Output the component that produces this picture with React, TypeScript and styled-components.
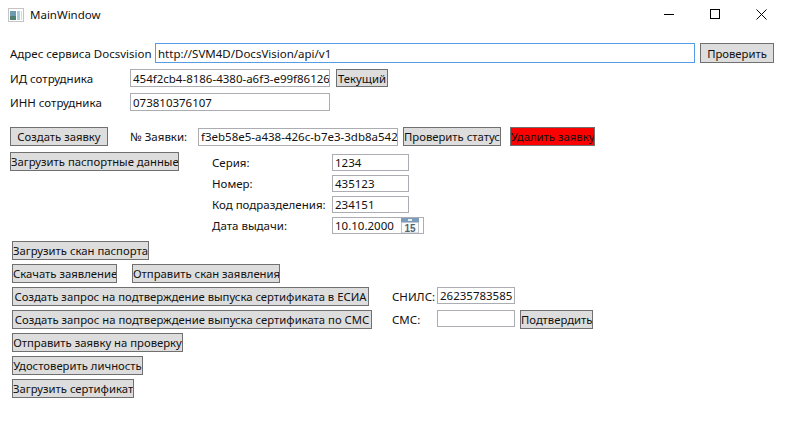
import React from 'react';
import styled, { createGlobalStyle } from 'styled-components';

const GlobalStyle = createGlobalStyle`
  html, body {
    margin: 0;
    padding: 0;
    background: #ffffff;
  }
`;

const Window = styled.div`
  width: 786px;
  height: 437px;
  overflow: hidden;
  background: #ffffff;
  color: #111111;
  font-family: "Noto Sans", "Open Sans", sans-serif;
  font-size: 11.5px;
  box-sizing: border-box;
`;

const TitleBar = styled.div`
  height: 30px;
  display: flex;
  align-items: center;
  padding: 0 2px 0 8px;
`;

const TitleText = styled.span`
  flex: 1;
  margin: -2px 0 0 6px;
  color: #111;
`;

const WindowControls = styled.div`
  display: flex;
  margin-top: -2px;
`;

const WindowButton = styled.div`
  width: 46px;
  height: 28px;
  display: flex;
  align-items: center;
  justify-content: center;
`;

const Content = styled.div`
  display: flex;
  flex-direction: column;
  padding: 9px 0 0 10px;
`;

const Row = styled.div<{ $top?: number; $left?: number; $h?: number }>`
  display: flex;
  align-items: center;
  height: ${(p) => p.$h ?? 19}px;
  margin-top: ${(p) => p.$top ?? 4}px;
  margin-left: ${(p) => p.$left ?? 0}px;
`;

const Label = styled.span<{ $w: number; $left?: number }>`
  width: ${(p) => p.$w}px;
  margin-left: ${(p) => p.$left ?? 0}px;
  flex: none;
  white-space: nowrap;
`;

const Field = styled.div<{ $w: number; $h?: number; $focus?: boolean; $top?: boolean }>`
  width: ${(p) => p.$w}px;
  height: ${(p) => p.$h ?? 18}px;
  flex: none;
  align-self: ${(p) => (p.$top ? 'flex-start' : 'auto')};
  box-sizing: border-box;
  border: 1px solid ${(p) => (p.$focus ? '#569de5' : '#abadb3')};
  padding: 0 2px;
  display: flex;
  align-items: center;
  overflow: hidden;
  white-space: nowrap;
  background: #fff;
`;

const DateField = styled(Field)`
  padding-right: 4px;
  align-items: flex-start;
  line-height: 15px;
`;

const Button = styled.div<{ $w: number; $h?: number; $left?: number; $danger?: boolean }>`
  width: ${(p) => p.$w}px;
  height: ${(p) => p.$h ?? 19}px;
  margin-left: ${(p) => p.$left ?? 0}px;
  flex: none;
  box-sizing: border-box;
  border: 1px solid #707070;
  background: ${(p) => (p.$danger ? '#ff0000' : '#dddddd')};
  font-size: 11.3px;
  display: flex;
  align-items: center;
  justify-content: safe center;
  overflow: hidden;
  white-space: nowrap;
`;

const PassportSection = styled.div`
  display: flex;
  margin-top: 6px;
  height: 85px;
`;

const PassportGrid = styled.div`
  display: grid;
  grid-template-columns: 120px 92px;
  grid-auto-rows: 17px;
  row-gap: 4px;
  margin: 2px 0 0 33px;
  align-items: center;
`;

const ActionList = styled.div`
  display: flex;
  flex-direction: column;
`;

const DateValue = styled.span`
  flex: 1;
`;

const CalendarIcon = () => (
  <svg width="18" height="15" viewBox="0 0 18 15">
    <rect x="0" y="0" width="18" height="15" fill="#eef2f6" />
    <rect x="0" y="0" width="18" height="4" fill="#7c9cbb" />
    <rect x="7" y="1" width="4" height="2" fill="#e6eef6" />
    <rect x="0.5" y="4.5" width="17" height="10.5" fill="#fbfcfd" stroke="#b9c4ce" />
    <text x="9" y="13.5" textAnchor="middle" fontSize="10" fontWeight="700" fill="#56626d" fontFamily="Liberation Sans, sans-serif">
      15
    </text>
  </svg>
);

const AppIcon = () => (
  <svg width="16" height="14" viewBox="0 0 16 14">
    <rect x="0.5" y="0.5" width="15" height="13" fill="#fff" stroke="#c4c4c4" />
    <rect x="2" y="3" width="6" height="9" fill="#6d9ab0" />
    <rect x="2" y="8" width="6" height="4" fill="#4f7f6c" />
    <rect x="9" y="3" width="3" height="9" fill="#a6cfd8" />
    <rect x="13" y="3" width="1" height="9" fill="#d9d9d9" />
  </svg>
);

const MinimizeIcon = () => (
  <svg width="10" height="10" viewBox="0 0 10 10">
    <path d="M0 5.5H10" stroke="#000" strokeWidth="1" />
  </svg>
);

const MaximizeIcon = () => (
  <svg width="10" height="10" viewBox="0 0 10 10">
    <rect x="0.5" y="0.5" width="9" height="9" fill="none" stroke="#000" />
  </svg>
);

const CloseIcon = () => (
  <svg width="11" height="11" viewBox="0 0 11 11">
    <path d="M0.5 0.5L10.5 10.5M10.5 0.5L0.5 10.5" stroke="#000" strokeWidth="1" />
  </svg>
);

const App: React.FC = () => {
  return (
    <Window>
      <GlobalStyle />
      <TitleBar>
        <AppIcon />
        <TitleText>MainWindow</TitleText>
        <WindowControls>
          <WindowButton><MinimizeIcon /></WindowButton>
          <WindowButton><MaximizeIcon /></WindowButton>
          <WindowButton><CloseIcon /></WindowButton>
        </WindowControls>
      </TitleBar>
      <Content>
        <Row $h={20}>
          <Label $w={145}>Адрес сервиса Docsvision</Label>
          <Field $w={540} $h={20} $focus>http://SVM4D/DocsVision/api/v1</Field>
          <Button $w={74} $h={20} $left={5}>Проверить</Button>
        </Row>
        <Row $top={6} $h={18}>
          <Label $w={120}>ИД сотрудника</Label>
          <Field $w={200}>454f2cb4-8186-4380-a6f3-e99f86126</Field>
          <Button $w={52} $h={18} $left={6}>Текущий</Button>
        </Row>
        <Row $top={6} $h={18}>
          <Label $w={120}>ИНН сотрудника</Label>
          <Field $w={200}>073810376107</Field>
        </Row>
        <Row $top={16}>
          <Button $w={98}>Создать заявку</Button>
          <Label $w={68} $left={22}>№ Заявки:</Label>
          <Field $w={200}>f3eb58e5-a438-426c-b7e3-3db8a542</Field>
          <Button $w={98} $left={5}>Проверить статус</Button>
          <Button $w={85} $left={9} $danger>Удалить заявку</Button>
        </Row>
        <PassportSection>
          <Button $w={169}>Загрузить паспортные данные</Button>
          <PassportGrid>
            <Label $w={120}>Серия:</Label>
            <Field $w={77} $h={17}>1234</Field>
            <Label $w={120}>Номер:</Label>
            <Field $w={77} $h={17}>435123</Field>
            <Label $w={120}>Код подразделения:</Label>
            <Field $w={77} $h={17}>234151</Field>
            <Label $w={120}>Дата выдачи:</Label>
            <DateField $w={92} $h={17}>
              <DateValue>10.10.2000</DateValue>
              <CalendarIcon />
            </DateField>
          </PassportGrid>
        </PassportSection>
        <ActionList>
          <Row $left={2}>
            <Button $w={137}>Загрузить скан паспорта</Button>
          </Row>
          <Row $left={2}>
            <Button $w={105}>Скачать заявление</Button>
            <Button $w={148} $left={15}>Отправить скан заявления</Button>
          </Row>
          <Row $left={2}>
            <Button $w={357}>Создать запрос на подтверждение выпуска сертификата в ЕСИА</Button>
            <Label $w={45} $left={23}>СНИЛС:</Label>
            <Field $w={78} $h={17} $top>26235783585</Field>
          </Row>
          <Row $left={2}>
            <Button $w={360}>Создать запрос на подтверждение выпуска сертификата по СМС</Button>
            <Label $w={45} $left={20}>СМС:</Label>
            <Field $w={78} $h={17} $top />
            <Button $w={73} $left={5}>Подтвердить</Button>
          </Row>
          <Row $left={2}>
            <Button $w={171}>Отправить заявку на проверку</Button>
          </Row>
          <Row $left={2}>
            <Button $w={131}>Удостоверить личность</Button>
          </Row>
          <Row $left={2}>
            <Button $w={122}>Загрузить сертификат</Button>
          </Row>
        </ActionList>
      </Content>
    </Window>
  );
};

export default App;
